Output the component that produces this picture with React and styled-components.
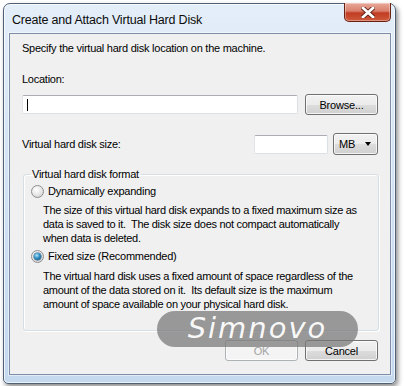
import React from "react";
import styled, { createGlobalStyle } from "styled-components";

const GlobalStyle = createGlobalStyle`
  html, body {
    margin: 0;
    padding: 0;
    background: #ffffff;
  }
  body {
    font-family: "Liberation Sans", Arial, sans-serif;
    font-size: 11px;
    color: #000;
  }
`;

const Page = styled.div`
  width: 404px;
  height: 386px;
  padding: 3px 0 0 3px;
  box-sizing: border-box;
`;

const Window = styled.div`
  position: relative;
  width: 393px;
  box-sizing: border-box;
  border: 1px solid #4f6077;
  border-radius: 7px 7px 5px 5px;
  background: linear-gradient(to bottom, #e4eef9 0%, #d3e3f3 40%, #c4d8ee 100%);
  box-shadow: 2px 3px 5px rgba(0, 0, 0, 0.45), inset 0 0 0 1px rgba(255, 255, 255, 0.7);
  padding-bottom: 8px;
`;

const TitleBar = styled.div`
  height: 29px;
  display: flex;
  align-items: flex-start;
  justify-content: space-between;
`;

const Title = styled.div`
  font-size: 12.5px;
  letter-spacing: -0.2px;
  color: #0c0c0c;
  padding: 9px 0 0 8px;
`;

const CloseButton = styled.div`
  width: 47px;
  height: 19px;
  margin: -1px 4px 0 0;
  box-sizing: border-box;
  border: 1px solid #6b2014;
  border-top: none;
  border-radius: 0 0 5px 5px;
  background: linear-gradient(to bottom, #e9a99a 0%, #d9806c 45%, #c13c22 55%, #cf5a3b 100%);
  box-shadow: inset 0 0 0 1px rgba(255, 255, 255, 0.35);
  display: flex;
  align-items: center;
  justify-content: center;
`;

const Client = styled.div`
  margin: 0 4px 0 5px;
  border: 1px solid #7d8fa8;
  background: #f0f0f0;
  padding: 7px 12px 13px 12px;
  box-shadow: 0 0 0 1px rgba(255, 255, 255, 0.5);
`;

const Text = styled.div`
  line-height: 14px;
  letter-spacing: -0.25px;
  margin-top: ${(p) => p.$top || 0}px;
`;

const Row = styled.div`
  display: flex;
  align-items: center;
  gap: ${(p) => p.$gap || 7}px;
  margin-top: ${(p) => p.$top || 0}px;
`;

const Spacer = styled.div`
  flex: 1;
`;

const TextBox = styled.div`
  width: ${(p) => p.$w}px;
  height: ${(p) => p.$h || 19}px;
  box-sizing: border-box;
  background: #fff;
  border: 1px solid #dbdfe6;
  border-top-color: #abadb3;
  border-left-color: #e2e3ea;
  border-radius: 2px;
  display: flex;
  align-items: center;
  padding-left: 4px;
`;

const Caret = styled.span`
  width: 1px;
  height: 12px;
  background: #000;
`;

const Button = styled.div`
  width: 73px;
  height: 21px;
  box-sizing: border-box;
  border: 1px solid ${(p) => (p.$disabled ? "#adb2b5" : "#707070")};
  border-radius: 3px;
  background: ${(p) =>
    p.$disabled
      ? "#f4f4f4"
      : "linear-gradient(to bottom, #f2f2f2 0%, #ebebeb 50%, #dddddd 51%, #cfcfcf 100%)"};
  box-shadow: inset 0 0 0 1px rgba(255, 255, 255, 0.75);
  color: ${(p) => (p.$disabled ? "#a3a3a3" : "#000")};
  display: flex;
  align-items: center;
  justify-content: center;
  letter-spacing: -0.2px;
`;

const Combo = styled(Button)`
  width: 45px;
  height: 22px;
  justify-content: space-between;
  padding: 0 6px 0 5px;
`;

const Arrow = styled.span`
  width: 0;
  height: 0;
  border-left: 3.5px solid transparent;
  border-right: 3.5px solid transparent;
  border-top: 4px solid #000;
`;

const Group = styled.fieldset`
  margin: 12px -1px 0 1px;
  padding: 3px 0 19px 0;
  border: 1px solid #d5dfe5;
  border-radius: 3px;
  box-shadow: inset 1px 1px 0 #fff, 1px 1px 0 #fff;
`;

const Legend = styled.legend`
  margin-left: 6px;
  padding: 0 2px;
  line-height: 14px;
  letter-spacing: -0.25px;
`;

const Option = styled.div`
  display: flex;
  align-items: center;
  gap: 4px;
  height: 14px;
  padding-left: 7px;
  margin-top: ${(p) => p.$top || 0}px;
  letter-spacing: -0.25px;
`;

const Radio = styled.span`
  width: 13px;
  height: 13px;
  box-sizing: border-box;
  border-radius: 50%;
  border: 1px solid #8f8f8f;
  background: radial-gradient(circle at 40% 35%, #ffffff 0%, #e8e8e8 50%, #c9c9c9 100%);
  display: flex;
  align-items: center;
  justify-content: center;

  &::after {
    content: "";
    display: ${(p) => (p.$checked ? "block" : "none")};
    width: 7px;
    height: 7px;
    border-radius: 50%;
    background: radial-gradient(circle at 40% 35%, #b5e6fb 0%, #2f8fc4 45%, #0d3f66 100%);
    box-shadow: 0 0 0 0.5px #1d4f78;
  }
`;

const Description = styled.div`
  padding-left: 19px;
  margin-top: ${(p) => p.$top || 5}px;
  line-height: 14px;
  letter-spacing: -0.3px;
`;

const Line = styled.span`
  display: block;
  white-space: nowrap;
`;

const Watermark = styled.div`
  position: absolute;
  left: 153px;
  top: 307px;
  width: 201px;
  height: 36px;
  border-radius: 18px;
  background: rgba(118, 118, 118, 0.72);
  color: rgba(255, 255, 255, 0.95);
  font-family: "DejaVu Sans", sans-serif;
  font-style: italic;
  font-weight: 300;
  font-size: 29px;
  letter-spacing: 2px;
  display: flex;
  align-items: center;
  justify-content: center;
  padding-bottom: 2px;
  box-sizing: border-box;
`;

const App = () => {
  return (
    <Page>
      <GlobalStyle />
      <Window>
        <TitleBar>
          <Title>Create and Attach Virtual Hard Disk</Title>
          <CloseButton>
            <svg width="14" height="11" viewBox="0 0 14 11">
              <path
                d="M2 1 L12 10 M12 1 L2 10"
                stroke="#5a1a10"
                strokeWidth="4.4"
                strokeLinecap="square"
              />
              <path
                d="M2 1 L12 10 M12 1 L2 10"
                stroke="#ffffff"
                strokeWidth="2.8"
                strokeLinecap="square"
              />
            </svg>
          </CloseButton>
        </TitleBar>
        <Client>
          <Text>Specify the virtual hard disk location on the machine.</Text>
          <Text $top={17}>Location:</Text>
          <Row $top={8}>
            <TextBox $w={276}>
              <Caret />
            </TextBox>
            <Button>Browse...</Button>
          </Row>
          <Row $top={18} $gap={5}>
            <Text>Virtual hard disk size:</Text>
            <Spacer />
            <TextBox $w={74} />
            <Combo>
              <span>MB</span>
              <Arrow />
            </Combo>
          </Row>
          <Group>
            <Legend>Virtual hard disk format</Legend>
            <Option>
              <Radio />
              <span>Dynamically expanding</span>
            </Option>
            <Description>
              <Line>The size of this virtual hard disk expands to a fixed maximum size as</Line>
              <Line>data is saved to it.&nbsp; The disk size does not compact automatically</Line>
              <Line>when data is deleted.</Line>
            </Description>
            <Option $top={4}>
              <Radio $checked />
              <span>Fixed size (Recommended)</span>
            </Option>
            <Description $top={6}>
              <Line>The virtual hard disk uses a fixed amount of space regardless of the</Line>
              <Line>amount of the data stored on it.&nbsp; Its default size is the maximum</Line>
              <Line>amount of space available on your physical hard disk.</Line>
            </Description>
          </Group>
          <Row $top={9}>
            <Spacer />
            <Button $disabled>OK</Button>
            <Button>Cancel</Button>
          </Row>
        </Client>
        <Watermark>Simnovo</Watermark>
      </Window>
    </Page>
  );
};

export default App;
